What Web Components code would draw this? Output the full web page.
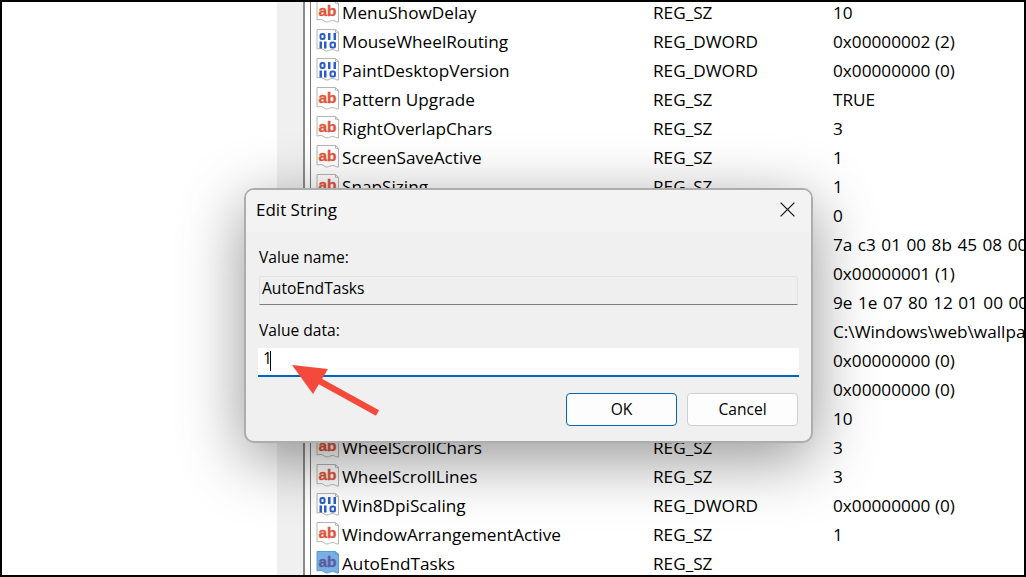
<!DOCTYPE html>
<html>
<head>
<meta charset="utf-8">
<title>Edit String</title>
<style>
  html, body { margin: 0; height: 100%; background: #000; }
</style>
</head>
<body>
<regedit-screen>
  <reg-row icon="sz"><span slot="name">MenuShowDelay</span><span slot="type">REG_SZ</span>10</reg-row>
  <reg-row icon="bin"><span slot="name">MouseWheelRouting</span><span slot="type">REG_DWORD</span>0x00000002 (2)</reg-row>
  <reg-row icon="bin"><span slot="name">PaintDesktopVersion</span><span slot="type">REG_DWORD</span>0x00000000 (0)</reg-row>
  <reg-row icon="sz"><span slot="name">Pattern Upgrade</span><span slot="type">REG_SZ</span>TRUE</reg-row>
  <reg-row icon="sz"><span slot="name">RightOverlapChars</span><span slot="type">REG_SZ</span>3</reg-row>
  <reg-row icon="sz"><span slot="name">ScreenSaveActive</span><span slot="type">REG_SZ</span>1</reg-row>
  <reg-row icon="sz"><span slot="name">SnapSizing</span><span slot="type">REG_SZ</span>1</reg-row>
  <reg-row>0</reg-row>
  <reg-row hex>7a c3 01 00 8b 45 08 00</reg-row>
  <reg-row>0x00000001 (1)</reg-row>
  <reg-row hex>9e 1e 07 80 12 01 00 00</reg-row>
  <reg-row>C:\Windows\web\wallpaper</reg-row>
  <reg-row>0x00000000 (0)</reg-row>
  <reg-row>0x00000000 (0)</reg-row>
  <reg-row>10</reg-row>
  <reg-row icon="sz"><span slot="name">WheelScrollChars</span><span slot="type">REG_SZ</span>3</reg-row>
  <reg-row icon="sz"><span slot="name">WheelScrollLines</span><span slot="type">REG_SZ</span>3</reg-row>
  <reg-row icon="bin"><span slot="name">Win8DpiScaling</span><span slot="type">REG_DWORD</span>0x00000000 (0)</reg-row>
  <reg-row icon="sz"><span slot="name">WindowArrangementActive</span><span slot="type">REG_SZ</span>1</reg-row>
  <reg-row icon="sz" selected><span slot="name">AutoEndTasks</span><span slot="type">REG_SZ</span></reg-row>

  <edit-dialog slot="overlay" heading="Edit String">
    <dialog-field label="Value name:" readonly>AutoEndTasks</dialog-field>
    <dialog-field label="Value data:" focused>1</dialog-field>
    <dialog-button slot="actions" primary>OK</dialog-button>
    <dialog-button slot="actions">Cancel</dialog-button>
  </edit-dialog>
  <red-arrow slot="overlay"></red-arrow>
</regedit-screen>

<script>
const uiFont = '"Open Sans", "Noto Sans", sans-serif'

// ---- list row icon (string value / binary value)
customElements.define('reg-icon',
  class extends HTMLElement {
    connectedCallback () {
      if (this.shadowRoot) return
      const kind = this.getAttribute('kind')
      const picked = this.hasAttribute('selected')
      const page = picked ? '#78b0e4' : '#fff'
      const edge = picked ? '#5f9ad6' : '#b4b4b4'
      const ink = picked ? '#5a5c9e' : '#e0553a'
      const label = kind === 'bin'
        ? `<g fill="#2a5fc8">
             <rect x="12" y="5" width="2.500" height="7"/><rect x="17.500" y="5" width="2.500" height="7"/>
             <rect x="3.500" y="13.500" width="2.500" height="7"/><rect x="8" y="13.500" width="2.500" height="7"/>
           </g>
           <g fill="none" stroke="#2a5fc8" stroke-width="2">
             <rect x="4.500" y="6" width="4" height="5" rx="1.500"/>
             <rect x="14.500" y="14.500" width="4.500" height="5" rx="1.500"/>
           </g>`
        : `<text x="11.500" y="16.500" class="ab">ab</text>`
      this.attachShadow({ mode: 'open' }).innerHTML = `
        <style>
          :host { display: block; width: 24px; height: 24px; margin-top: -2px; }
          svg { display: block; }
          text { font-family: "Liberation Sans", sans-serif; font-weight: 700; text-anchor: middle; }
          .ab { font-size: 15.5px; fill: ${ink}; stroke: ${ink}; stroke-width: .35px; }
        </style>
        <svg width="24" height="24" viewBox="0 0 24 24">
          <path d="M1 1.500H19.500l3 2.800V23c-2.400.4-3.600-1.500-6-1.500s-3.200 1.500-5.600 1.500-3.500-2.500-6-2.500c-1.500 0-2.700.4-3.900.4z" fill="${page}" stroke="${edge}"/>
          <path d="M19.500 1.500v2.800h3" fill="none" stroke="${edge}"/>
          ${label}
        </svg>`
    }
  }
)

// ---- one row of the value list
const rowTemplate = document.createElement('template')
rowTemplate.innerHTML = `
  <style>
    :host {
      display: grid;
      grid-template-columns: 26px 311px 180px 1fr;
      align-items: center;
      height: 29px;
      padding-left: 5px;
      white-space: nowrap;
      overflow: hidden;
    }
    :host([hex]) .value { word-spacing: 1px; }
    .icon { height: 24px; }
  </style>
  <div class="icon"></div>
  <div><slot name="name"></slot></div>
  <div><slot name="type"></slot></div>
  <div class="value"><slot></slot></div>
`
customElements.define('reg-row',
  class extends HTMLElement {
    constructor () {
      super()
      this.attachShadow({ mode: 'open' }).appendChild(rowTemplate.content.cloneNode(true))
    }

    connectedCallback () {
      const slot = this.shadowRoot.querySelector('.icon')
      if (this.hasAttribute('icon') && !slot.firstChild) {
        const icon = document.createElement('reg-icon')
        icon.setAttribute('kind', this.getAttribute('icon'))
        if (this.hasAttribute('selected')) icon.setAttribute('selected', '')
        slot.appendChild(icon)
      }
    }
  }
)

// ---- the regedit window behind the dialog
const screenTemplate = document.createElement('template')
screenTemplate.innerHTML = `
  <style>
    :host {
      display: block;
      position: relative;
      width: 1026px;
      height: 577px;
      box-sizing: border-box;
      border: 2px solid #000;
      overflow: hidden;
      background: #fff;
      color: #000;
      font: 17.2px ${uiFont};
    }
    .window { display: flex; height: 100%; }
    .tree { width: 275px; flex: none; }
    .gutter { width: 26px; flex: none; background: #f0f0f0; }
    .rule { width: 7px; flex: none; box-sizing: border-box; border-left: 2px solid #8b8b8b; }
    .list { flex: 1; min-width: 0; border-left: 1px solid #777; }
    .rows { margin-top: -4px; }
  </style>
  <div class="window">
    <div class="tree"></div>
    <div class="gutter"></div>
    <div class="rule"></div>
    <div class="list"><div class="rows"><slot></slot></div></div>
  </div>
  <slot name="overlay"></slot>
`
customElements.define('regedit-screen',
  class extends HTMLElement {
    constructor () {
      super()
      this.attachShadow({ mode: 'open' }).appendChild(screenTemplate.content.cloneNode(true))
    }
  }
)

// ---- Edit String dialog
const dialogTemplate = document.createElement('template')
dialogTemplate.innerHTML = `
  <style>
    :host {
      display: flex;
      flex-direction: column;
      position: absolute;
      left: 242px;
      top: 186px;
      width: 569px;
      height: 255px;
      box-sizing: border-box;
      border: 2px solid #adadad;
      border-radius: 10px;
      background: #f0f0f0;
      box-shadow: 0 16px 64px rgba(0, 0, 0, .42);
      font: 15.6px ${uiFont};
      color: #000;
      overflow: hidden;
    }
    header {
      display: flex;
      align-items: center;
      justify-content: space-between;
      box-sizing: border-box;
      height: 42px;
      flex: none;
      padding: 0 16px 4px 10px;
      background: #f3f3f3;
      font-size: 17px;
    }
    svg { display: block; }
    .body {
      display: flex;
      flex-direction: column;
      flex: 1;
      padding: 14px 13px 0 13px;
    }
    .actions {
      display: flex;
      justify-content: flex-end;
      gap: 10px;
      margin-top: 16px;
    }
  </style>
  <header>
    <span class="heading"></span>
    <svg width="15" height="15" viewBox="0 0 15 15"><path d="M.6.6l13.800 13.800M14.400.6L.6 14.400" stroke="#1a1a1a" stroke-width="1.300" fill="none"/></svg>
  </header>
  <div class="body">
    <slot></slot>
    <div class="actions"><slot name="actions"></slot></div>
  </div>
`
customElements.define('edit-dialog',
  class extends HTMLElement {
    constructor () {
      super()
      this.attachShadow({ mode: 'open' }).appendChild(dialogTemplate.content.cloneNode(true))
      this.shadowRoot.querySelector('.heading').textContent = this.getAttribute('heading')
    }
  }
)

// ---- label + text box
const fieldTemplate = document.createElement('template')
fieldTemplate.innerHTML = `
  <style>
    :host { display: block; }
    label { display: block; height: 22px; line-height: 22px; margin-bottom: 8px; }
    .box {
      box-sizing: border-box;
      height: 29px;
      line-height: 23px;
      padding-left: 2px;
      background: #efefef;
      border: 1px solid #e2e2e2;
      border-bottom-color: #7c7c7c;
      border-radius: 2px 2px 0 0;
    }
    :host([focused]) { margin-top: 14px; }
    :host([focused]) label { margin-bottom: 7px; }
    :host([focused]) .box {
      display: flex;
      margin: 0 -1px;
      padding-left: 5px;
      line-height: 21px;
      background: #fff;
      border: 0;
      border-bottom: 2px solid #0067c0;
      border-radius: 0;
    }
    .caret { display: none; width: 1.500px; height: 20px; margin: 3px 0 0 -2px; background: #000; }
    :host([focused]) .caret { display: block; }
  </style>
  <label></label>
  <div class="box"><slot></slot><span class="caret"></span></div>
`
customElements.define('dialog-field',
  class extends HTMLElement {
    constructor () {
      super()
      this.attachShadow({ mode: 'open' }).appendChild(fieldTemplate.content.cloneNode(true))
      this.shadowRoot.querySelector('label').textContent = this.getAttribute('label')
    }
  }
)

// ---- dialog buttons
const buttonTemplate = document.createElement('template')
buttonTemplate.innerHTML = `
  <style>
    :host {
      display: flex;
      align-items: center;
      justify-content: center;
      box-sizing: border-box;
      width: 111px;
      height: 33px;
      padding-bottom: 2px;
      background: #fdfdfd;
      border: 1px solid #d0d0d0;
      border-radius: 4px;
    }
    :host([primary]) { border: 1.500px solid #0067c0; }
  </style>
  <slot></slot>
`
customElements.define('dialog-button',
  class extends HTMLElement {
    constructor () {
      super()
      this.attachShadow({ mode: 'open' }).appendChild(buttonTemplate.content.cloneNode(true))
    }
  }
)

// ---- annotation arrow drawn over the dialog
const arrowTemplate = document.createElement('template')
arrowTemplate.innerHTML = `
  <style>
    :host { position: absolute; left: 284px; top: 357px; width: 100px; height: 62px; }
    svg { display: block; }
  </style>
  <svg width="100" height="62" viewBox="0 0 100 62">
    <path d="M6 6L42 10 27 35z" fill="#f44a3c"/>
    <path d="M28 19L91.500 54" stroke="#f44a3c" stroke-width="6.500" fill="none"/>
  </svg>
`
customElements.define('red-arrow',
  class extends HTMLElement {
    constructor () {
      super()
      this.attachShadow({ mode: 'open' }).appendChild(arrowTemplate.content.cloneNode(true))
    }
  }
)
</script>
</body>
</html>
